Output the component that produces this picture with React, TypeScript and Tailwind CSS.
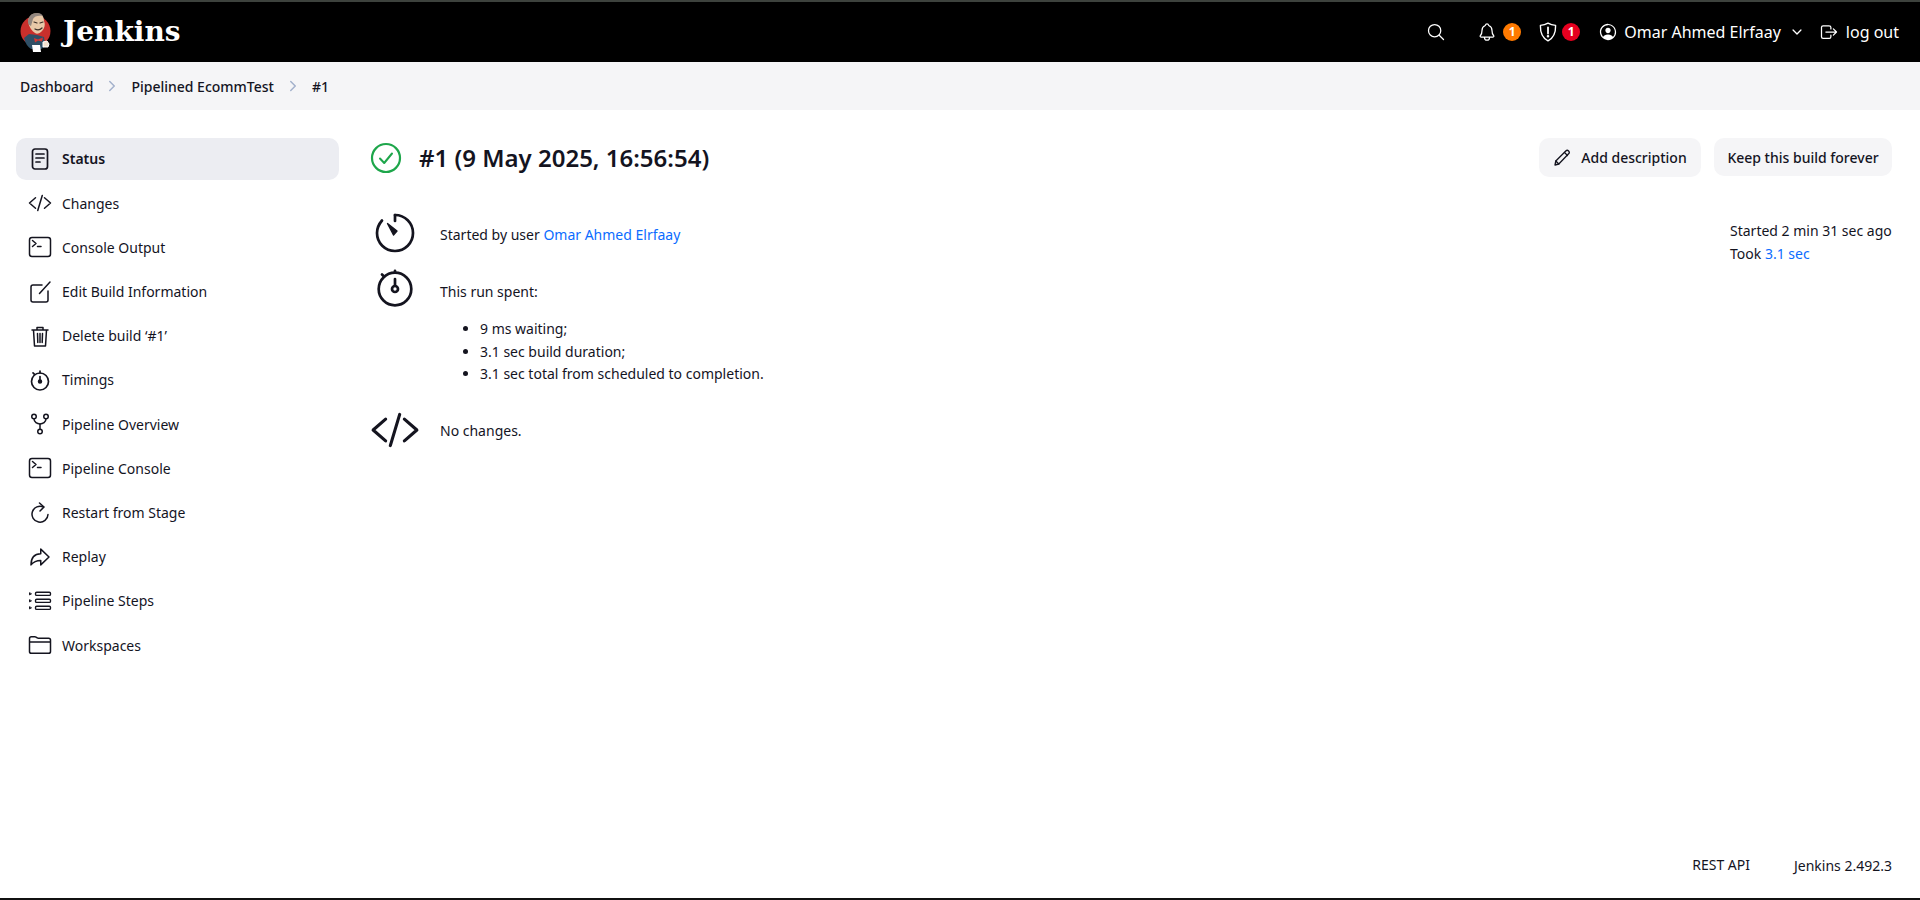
import React from 'react';
import {
  IoSearchOutline,
  IoNotificationsOutline,
  IoPersonCircleOutline,
  IoChevronDown,
  IoLogOutOutline,
  IoChevronForward,
  IoCodeSlashOutline,
  IoGitNetworkOutline,
  IoArrowRedoOutline,
  IoFolderOutline,
} from 'react-icons/io5';

const FONT = "font-['Noto_Sans','Open_Sans',sans-serif]";

const DocIcon = ({ size = 24 }: { size?: number }) => (
  <svg width={size} height={size} viewBox="0 0 24 24" fill="none" stroke="currentColor" strokeWidth="1.7" strokeLinecap="round" strokeLinejoin="round">
    <rect x="4.5" y="2" width="15" height="20" rx="2.5" />
    <path d="M8 7h8M8 11h8M8 15h4" />
  </svg>
);

const TerminalIcon = ({ size = 24 }: { size?: number }) => (
  <svg width={size} height={size} viewBox="0 0 24 24" fill="none" stroke="currentColor" strokeWidth="1.5" strokeLinecap="round" strokeLinejoin="round">
    <rect x="1.5" y="2.5" width="21" height="19" rx="2.5" />
    <path d="M4.5 5.5l3.5 3-3.5 3M9.5 11.5h3.5" />
  </svg>
);

const EditIcon = ({ size = 24 }: { size?: number }) => (
  <svg width={size} height={size} viewBox="0 0 24 24" fill="none" stroke="currentColor" strokeWidth="1.5" strokeLinecap="round" strokeLinejoin="round">
    <path d="M14 5H5a2 2 0 0 0-2 2v13a2 2 0 0 0 2 2h13a2 2 0 0 0 2-2v-9" />
    <path d="M11.5 13.5L22 2" />
  </svg>
);

const TrashIcon = ({ size = 24 }: { size?: number }) => (
  <svg width={size} height={size} viewBox="0 0 24 24" fill="none" stroke="currentColor" strokeWidth="1.5" strokeLinecap="round" strokeLinejoin="round">
    <path d="M4 6h16M9 5.5V3.500h6v2M5.500 6l1 16h11l1-16" />
    <path d="M9.500 9.500l.3 9M12 9.500v9M14.500 9.500l-.3 9" />
  </svg>
);

const StopwatchIcon = ({ size = 24, width = 1.7 }: { size?: number; width?: number }) => (
  <svg width={size} height={size} viewBox="0 0 24 24" fill="none" stroke="currentColor" strokeWidth={width} strokeLinecap="round" strokeLinejoin="round">
    <circle cx="12" cy="13.500" r="8.500" />
    <path d="M12 3v2M5 4.800l1.300 1.400M12 8.500v3.200" />
    <circle cx="12" cy="13.500" r="1.400" fill="currentColor" />
  </svg>
);

const BigStopwatch = () => (
  <svg width="40" height="40" viewBox="0 0 40 40" fill="none" stroke="currentColor" strokeWidth="2.700" strokeLinecap="round" strokeLinejoin="round">
    <circle cx="20" cy="21" r="16.300" />
    <path d="M20 2.800v1.600M7 6.500l1.800 1.800M20 11v6" />
    <circle cx="20" cy="21" r="3" />
  </svg>
);

const BigTimer = () => (
  <svg width="40" height="40" viewBox="0 0 40 40" fill="none" stroke="currentColor" strokeWidth="2.700" strokeLinecap="round" strokeLinejoin="round">
    <path d="M20 2c10 0 18 8 18 18s-8 18-18 18S2 30 2 20c0-5 2-9 5-12.500" />
    <path d="M20 2v6" />
    <path d="M12.500 10.500l9.500 7.500-3.500 4z" fill="currentColor" strokeWidth="1.400" />
  </svg>
);

const RestartIcon = ({ size = 24 }: { size?: number }) => (
  <svg width={size} height={size} viewBox="0 0 24 24" fill="none" stroke="currentColor" strokeWidth="1.5" strokeLinecap="round" strokeLinejoin="round">
    <path d="M15.500 6A8 8 0 1 0 20 13.500" />
    <path d="M11.500 2l4.500 4-4 4" />
  </svg>
);

const StepsIcon = ({ size = 24 }: { size?: number }) => (
  <svg width={size} height={size} viewBox="0 0 24 24" fill="none" stroke="currentColor" strokeWidth="1.400" strokeLinejoin="round">
    <rect x="7.500" y="3.200" width="15" height="3.200" rx="1.200" />
    <rect x="7.500" y="10.200" width="15" height="3.200" rx="1.200" />
    <rect x="7.500" y="17.200" width="15" height="3.200" rx="1.200" />
    <path d="M1.500 3.700l2 1.100-2 1.100zM1.500 10.700l2 1.100-2 1.100zM1.500 17.700l2 1.100-2 1.100z" strokeWidth="1" />
  </svg>
);

const PencilIcon = () => (
  <svg width="18" height="18" viewBox="0 0 18 18" fill="none" stroke="currentColor" strokeWidth="1.300" strokeLinecap="round" strokeLinejoin="round">
    <path d="M2 16l.8-4L12.800 2c.8-.8 2-.8 2.800 0 .8.8.8 2 0 2.800L5.800 15z" />
    <path d="M11.500 3.500l3 3M2.800 12l3 3" />
  </svg>
);

const ShieldIcon = () => (
  <svg width="18" height="20" viewBox="0 0 18 20" fill="none" stroke="currentColor" strokeWidth="1.400" strokeLinecap="round" strokeLinejoin="round">
    <path d="M9 1.200c2.200 1.300 4.500 2 7.600 2.200C16.800 11 14.500 16 9 18.800 3.500 16 1.200 11 1.400 3.400 4.500 3.200 6.800 2.500 9 1.200z" />
    <path d="M9 5.500v6" strokeWidth="1.800" />
    <circle cx="9" cy="14.200" r="0.600" fill="currentColor" />
  </svg>
);

const JenkinsLogo = () => (
  <svg width="32" height="42" viewBox="0 0 32 42">
    <circle cx="15.500" cy="20" r="15" fill="#c9302c" />
    <path d="M4 27c1 5 4 9 7 11l10 0c3-1 4-3 4-6l-1-6-7-2-8-1z" fill="#2f4f66" />
    <path d="M14 27l4 1.500 5-2-1 4-4-1-3 2z" fill="#d33833" />
    <path d="M8 11c0-5 3-9 9-9 5 0 7 4 7 8 1 2 1 5 0 7-2 4-6 7-9 5-3-2-6-6-7-11z" fill="#e8c9a8" />
    <path d="M8 11c0-5 3-9 9-9 3 0 5 1 6 3-4-1-9 0-10 3l-2 7c-2-1-3-2-3-4z" fill="#6d6b6d" opacity="0.7" />
    <path d="M14 11l3 1M20 12l3-1M15 18c2 1 5 1 7-1" stroke="#3c2f28" strokeWidth="1.200" fill="none" strokeLinecap="round" />
    <path d="M12 34h8l1 7H13z" fill="#ffffff" />
    <path d="M23 31l4-1 2 3-1 3-5 0z" fill="#f3e2cf" stroke="#fff" strokeWidth="1" />
  </svg>
);

const NAV: { label: string; icon: React.ReactNode }[] = [
  { label: 'Status', icon: <DocIcon /> },
  { label: 'Changes', icon: <IoCodeSlashOutline size={24} /> },
  { label: 'Console Output', icon: <TerminalIcon /> },
  { label: 'Edit Build Information', icon: <EditIcon /> },
  { label: 'Delete build ‘#1’', icon: <TrashIcon /> },
  { label: 'Timings', icon: <StopwatchIcon /> },
  { label: 'Pipeline Overview', icon: <IoGitNetworkOutline size={24} /> },
  { label: 'Pipeline Console', icon: <TerminalIcon /> },
  { label: 'Restart from Stage', icon: <RestartIcon /> },
  { label: 'Replay', icon: <IoArrowRedoOutline size={24} /> },
  { label: 'Pipeline Steps', icon: <StepsIcon /> },
  { label: 'Workspaces', icon: <IoFolderOutline size={24} /> },
];

const Sidebar = () => (
  <aside className="w-[323px] ml-4 shrink-0 flex flex-col">
    {NAV.map((item, i) => (
      <div
        key={item.label}
        className={`h-[42px] mb-[2.2px] pl-3 flex items-center gap-[10px] rounded-[10px] text-[14px] text-[#14141f] ${i === 0 ? 'bg-[#ecedf2] font-semibold' : ''}`}
      >
        <span className="w-6 h-6 flex items-center justify-center">{item.icon}</span>
        <span className={i === 0 ? '-mt-px' : ''}>{item.label}</span>
      </div>
    ))}
  </aside>
);

export default function App() {
  return (
    <div className={`${FONT} w-full h-[900px] flex flex-col bg-white text-[#14141f] text-[14px] overflow-hidden`}>
      <header className="h-[62px] shrink-0 bg-black border-t-2 border-[#3d423d] flex items-center text-white">
        <div className="ml-[20px] flex items-center gap-[11px]">
          <JenkinsLogo />
          <span className="font-['DejaVu_Serif',serif] font-bold text-[28px] leading-none">Jenkins</span>
        </div>
        <div className="ml-auto flex items-center mr-[21px] text-[16px]">
          <IoSearchOutline size={20} />
          <div className="ml-[31px] flex items-center gap-[6px]">
            <IoNotificationsOutline size={20} />
            <span className="w-[18px] h-[18px] rounded-full bg-[#ff7a00] text-[12px] font-bold flex items-center justify-center">1</span>
          </div>
          <div className="ml-[18px] flex items-center gap-[5px]">
            <ShieldIcon />
            <span className="w-[18px] h-[18px] rounded-full bg-[#e6001f] text-[12px] font-bold flex items-center justify-center">1</span>
          </div>
          <div className="ml-[18px] flex items-center gap-[6px]">
            <IoPersonCircleOutline size={20} />
            <span>Omar Ahmed Elrfaay</span>
          </div>
          <IoChevronDown size={14} className="ml-[9px]" />
          <div className="ml-[15px] flex items-center gap-[7px]">
            <IoLogOutOutline size={20} />
            <span>log out</span>
          </div>
        </div>
      </header>

      <nav className="h-[48px] shrink-0 bg-[#f5f5f7] flex items-center pl-5 font-medium text-[14px]">
        <span>Dashboard</span>
        <IoChevronForward size={16} className="mx-[11px] text-[#a3b1cc]" />
        <span>Pipelined EcommTest</span>
        <IoChevronForward size={16} className="mx-[11px] text-[#a3b1cc]" />
        <span>#1</span>
      </nav>

      <div className="flex-1 flex pt-7 min-h-0">
        <Sidebar />
        <main className="flex-1 pl-[31px] pr-7 min-w-0">
          <div className="flex items-start justify-between">
            <div className="flex items-center h-[42px]">
              <svg width="32" height="32" viewBox="0 0 32 32" fill="none" className="text-[#1ea64b] -mt-[2px]" stroke="currentColor" strokeLinecap="round" strokeLinejoin="round">
                <circle cx="16" cy="16" r="14" strokeWidth="2.200" />
                <path d="M10 16.500l4.200 4.500L22 11.500" strokeWidth="2" />
              </svg>
              <h1 className="ml-[17px] text-[24px] font-semibold -mt-[2px]">#1 (9 May 2025, 16:56:54)</h1>
            </div>
            <div className="flex items-start gap-[13px]">
              <button className="h-[39px] w-[162px] rounded-[10px] bg-[#f5f5f7] flex items-center justify-center gap-[10px] font-medium">
                <PencilIcon />
                Add description
              </button>
              <button className="h-[38px] w-[178px] rounded-[10px] bg-[#f5f5f7] flex items-center justify-center font-medium">
                Keep this build forever
              </button>
            </div>
          </div>

          <div className="flex justify-between mt-[26px]">
            <div className="flex flex-col">
              <div className="flex items-center h-[54px]">
                <span className="w-[40px] ml-[5px] flex justify-center">
                  <BigTimer />
                </span>
                <p className="ml-[25px] mt-[3px]">
                  Started by user <a className="text-[#0b6cff]">Omar Ahmed Elrfaay</a>
                </p>
              </div>
              <div className="flex mt-[6px]">
                <span className="w-[40px] ml-[5px] flex justify-center h-[42px] pt-[2px]">
                  <BigStopwatch />
                </span>
                <div className="ml-[25px] pt-[15px]">
                  <p>This run spent:</p>
                  <ul className="list-disc pl-10 mt-[16px] leading-[22.7px]">
                    <li>9 ms waiting;</li>
                    <li>3.1 sec build duration;</li>
                    <li>3.1 sec total from scheduled to completion.</li>
                  </ul>
                </div>
              </div>
              <div className="flex items-center mt-[19px]">
                <span className="w-[50px] flex justify-center">
                  <IoCodeSlashOutline size={50} />
                </span>
                <p className="ml-[20px]">No changes.</p>
              </div>
            </div>
            <div className="w-[162px] pt-[13px] leading-[23px]">
              <p>Started 2 min 31 sec ago</p>
              <p>
                Took <a className="text-[#0b6cff]">3.1 sec</a>
              </p>
            </div>
          </div>
        </main>
      </div>

      <footer className="h-[62px] shrink-0 flex items-start justify-end pr-7 pt-[17px] gap-[44px] border-b-2 border-[#111]">
        <span className="-mt-px">REST API</span>
        <span>Jenkins 2.492.3</span>
      </footer>
    </div>
  );
}
